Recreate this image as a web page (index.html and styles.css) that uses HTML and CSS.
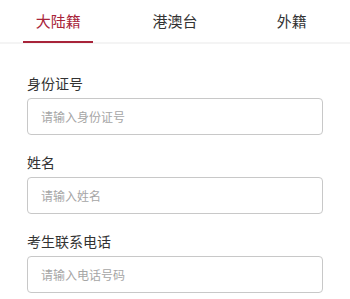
FILE: index.html
```html
<!DOCTYPE html>
<html lang="zh-CN">
<head>
<meta charset="utf-8">
<title>考生信息</title>
<link rel="stylesheet" href="styles.css">
</head>
<body>
<div class="tabs">
  <div class="tab active">大陆籍</div>
  <div class="tab">港澳台</div>
  <div class="tab">外籍</div>
</div>
<form class="form">
  <div class="field">
    <div class="label">身份证号</div>
    <input class="input" type="text" placeholder="请输入身份证号">
  </div>
  <div class="field">
    <div class="label">姓名</div>
    <input class="input" type="text" placeholder="请输入姓名">
  </div>
  <div class="field">
    <div class="label">考生联系电话</div>
    <input class="input" type="text" placeholder="请输入电话号码">
  </div>
</form>
</body>
</html>
```
FILE: styles.css
```css
html, body {
  margin: 0;
  padding: 0;
  background: #ffffff;
}
body {
  font-family: "Noto Sans CJK SC", "Noto Sans", sans-serif;
  color: #333333;
}
.tabs {
  display: flex;
  height: 42px;
  border-bottom: 2px solid #f4f4f4;
}
.tab {
  flex: 1;
  position: relative;
  text-align: center;
  font-size: 15px;
  line-height: 41px;
  color: #333333;
}
.tab.active {
  color: #a8243a;
}
.tab.active::after {
  content: "";
  position: absolute;
  left: 50%;
  bottom: -1px;
  width: 70px;
  height: 2px;
  margin-left: -35px;
  background: #a8243a;
}
.form {
  padding: 29px 27px 0;
  margin: 0;
}
.field {
  margin-bottom: 17.5px;
}
.label {
  font-size: 14px;
  line-height: 20px;
  margin-bottom: 4.5px;
  color: #333333;
}
.input {
  display: block;
  box-sizing: border-box;
  width: 100%;
  height: 37px;
  margin: 0;
  padding: 0 12px 0 13px;
  border: 1px solid #c8c8c8;
  border-radius: 4px;
  font-family: "Noto Sans CJK SC", "Noto Sans", sans-serif;
  font-size: 12px;
  color: #333333;
  background: #ffffff;
  outline: none;
}
.input::placeholder {
  color: #a6a6a6;
}
```
